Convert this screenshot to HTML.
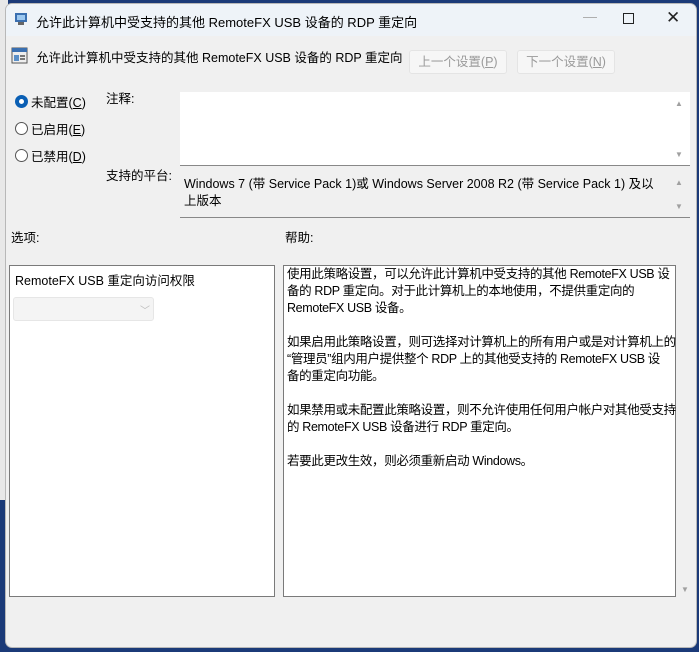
<!DOCTYPE html>
<html><head><meta charset="utf-8"><style>
*{margin:0;padding:0;box-sizing:border-box}
body{width:699px;height:652px;overflow:hidden;background:#1b3a78;position:relative;font-family:"Liberation Sans","Noto Sans CJK SC",sans-serif;font-size:12.5px;color:#000}
.a{position:absolute;white-space:nowrap}
.bgl{position:absolute;left:0;top:0;width:8px;height:500px;background:#e8e8e8}
.win{position:absolute;left:5px;top:3px;width:692px;height:645px;background:#f0f0f0;border:1px solid #b8b8b8;border-radius:7px;overflow:hidden}
.tb{position:absolute;left:0;top:0;width:100%;height:32px;background:#eef3f8}
.box{position:absolute;background:#fff;border:1px solid #7a7a7a}
.btn{position:absolute;background:#f6f6f6;border:1px solid #e4e4e4;border-radius:3px;color:#9a9a9a;text-align:center;line-height:22px;font-size:12.5px}
.rad{position:absolute;width:13px;height:13px;border:1px solid #555;border-radius:50%;background:#fff}
.arr{position:absolute;color:#a0a0a0;font-size:8px}
u{text-decoration:underline}
</style></head><body>
<div class="bgl"></div>
<div class="win">
<div class="tb"></div>
<svg class="a" style="left:8px;top:7px" width="16" height="16"><rect x="1" y="2" width="12" height="9" fill="#3a6fb0"/><rect x="3" y="4" width="8" height="5" fill="#9cc8f0"/><rect x="4" y="11" width="6" height="3" fill="#666"/></svg>
<div class="a" style="left:30px;top:8px;font-size:13px">允许此计算机中受支持的其他 RemoteFX USB 设备的 RDP 重定向</div>
<div class="a" style="left:577px;top:4px;color:#aaa;font-size:14px">—</div>
<div class="a" style="left:617px;top:9px;width:11px;height:11px;border:1.3px solid #222"></div>
<div class="a" style="left:660px;top:4px;font-size:17px;color:#222">✕</div>
<svg class="a" style="left:5px;top:43px" width="18" height="18"><rect x="1" y="1" width="15" height="15" fill="#eee" stroke="#555"/><rect x="1" y="1" width="15" height="4" fill="#3a6fb0"/><rect x="3" y="8" width="5" height="6" fill="#5a8fc8"/><rect x="9" y="8" width="5" height="2" fill="#777"/><rect x="9" y="11" width="5" height="2" fill="#777"/></svg>
<div class="a" style="left:30px;top:43px;font-size:12.5px">允许此计算机中受支持的其他 RemoteFX USB 设备的 RDP 重定向</div>
<div class="btn" style="left:403px;top:46px;width:98px;height:24px">上一个设置(<u>P</u>)</div>
<div class="btn" style="left:511px;top:46px;width:98px;height:24px">下一个设置(<u>N</u>)</div>
<div class="rad" style="left:9px;top:91px;border:4px solid #0a5fb4"></div>
<div class="a" style="left:25px;top:88px">未配置(<u>C</u>)</div>
<div class="rad" style="left:9px;top:118px"></div>
<div class="a" style="left:25px;top:115px">已启用(<u>E</u>)</div>
<div class="rad" style="left:9px;top:145px"></div>
<div class="a" style="left:25px;top:142px">已禁用(<u>D</u>)</div>
<div class="a" style="left:100px;top:84px">注释:</div>
<div class="box" style="left:174px;top:88px;width:510px;height:74px;border:none;border-bottom:1px solid #888"></div>
<div class="arr" style="left:669px;top:95px">▲</div><div class="arr" style="left:669px;top:146px">▼</div>
<div class="a" style="left:100px;top:161px">支持的平台:</div>
<div class="a" style="left:174px;top:166px;width:510px;height:48px;border-bottom:1px solid #888"></div>
<div class="a" style="left:178px;top:169px">Windows 7 (带 Service Pack 1)或 Windows Server 2008 R2 (带 Service Pack 1) 及以</div>
<div class="a" style="left:178px;top:186px">上版本</div>
<div class="arr" style="left:669px;top:174px">▲</div><div class="arr" style="left:669px;top:198px">▼</div>
<div class="a" style="left:5px;top:223px">选项:</div>
<div class="a" style="left:279px;top:223px">帮助:</div>
<div class="box" style="left:3px;top:261px;width:266px;height:332px"></div>
<div class="a" style="left:9px;top:266px">RemoteFX USB 重定向访问权限</div>
<div class="a" style="left:7px;top:293px;width:141px;height:24px;background:#f4f4f4;border:1px solid #e6e6e6;border-radius:3px"><span class="a" style="left:126px;top:4px;color:#bbb;font-size:10px">﹀</span></div>
<div class="box" style="left:277px;top:261px;width:393px;height:332px"></div>
<div class="a" style="left:281px;top:262px;line-height:17px;letter-spacing:-0.35px">使用此策略设置，可以允许此计算机中受支持的其他 RemoteFX USB 设<br>备的 RDP 重定向。对于此计算机上的本地使用，不提供重定向的<br>RemoteFX USB 设备。<br><br>如果启用此策略设置，则可选择对计算机上的所有用户或是对计算机上的<br>“管理员”组内用户提供整个 RDP 上的其他受支持的 RemoteFX USB 设<br>备的重定向功能。<br><br>如果禁用或未配置此策略设置，则不允许使用任何用户帐户对其他受支持<br>的 RemoteFX USB 设备进行 RDP 重定向。<br><br>若要此更改生效，则必须重新启动 Windows。</div>
<div class="arr" style="left:675px;top:581px">▼</div>
</div>
</body></html>
